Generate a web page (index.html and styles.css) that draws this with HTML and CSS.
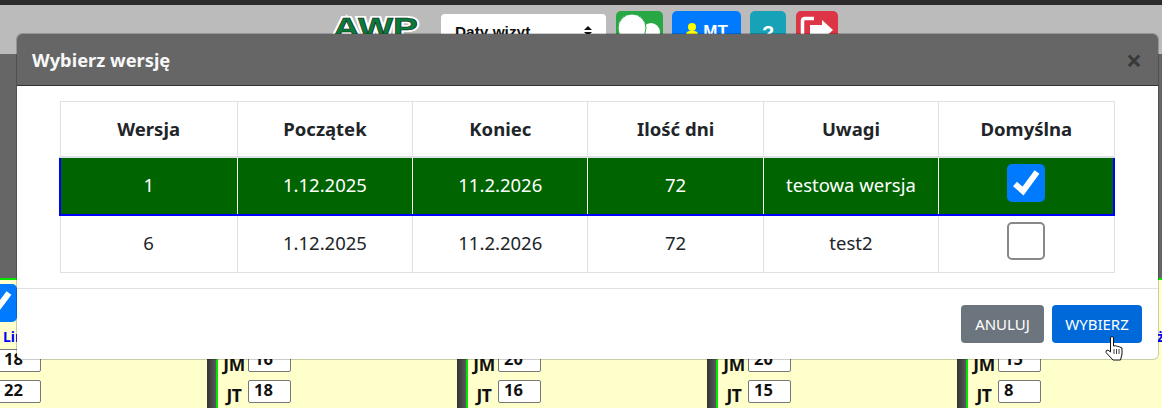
FILE: index.html
```html
<!DOCTYPE html>
<html lang="pl">
<head>
  <meta charset="UTF-8">
  <title>Wybierz wersję</title>
  <link rel="stylesheet" href="styles.css">
</head>
<body>
  <div class="topline"></div>
  <div class="toolbar">
    <svg class="logo" width="90" height="32" viewBox="0 0 90 32">
      <text x="2" y="27" textLength="85" lengthAdjust="spacingAndGlyphs" class="logo-back">AWP</text>
      <text x="2" y="27" textLength="85" lengthAdjust="spacingAndGlyphs" class="logo-text">AWP</text>
    </svg>
    <div class="select-box">Daty wizyt
      <svg width="8" height="10" viewBox="0 0 8 10"><path d="M4 0L8 4H0zM4 10L0 6H8z" fill="#111"/></svg>
    </div>
    <div class="tool green">
      <svg width="47" height="30" viewBox="0 0 47 30">
        <circle cx="35" cy="21" r="9" fill="#fff"/>
        <circle cx="16" cy="17" r="14" fill="#fff" stroke="#28a745" stroke-width="1"/>
      </svg>
    </div>
    <div class="tool blue">
      <svg width="14" height="20" viewBox="0 0 14 20"><circle cx="7" cy="5" r="4" fill="#ff0"/><rect x="1" y="9" width="12" height="9" rx="4" fill="#ff0"/></svg>
      MT
    </div>
    <div class="tool teal">?</div>
    <div class="tool red">
      <svg width="42" height="30" viewBox="0 0 42 30">
        <path d="M18 7.500H9Q6.500 7.500 6.500 10V26" fill="none" stroke="#fff" stroke-width="3.500"/>
        <path d="M14 14H26V9L37 19L26 29V24H14z" fill="#fff"/>
      </svg>
    </div>
  </div>
  <div class="band"></div>

  <div class="columns">
    <div class="col">
      <div class="bar"></div>
      <div class="cell">
        <div class="check-big">
          <svg width="34" height="34" viewBox="0 0 34 34"><path d="M5 19L13 27L28 7" fill="none" stroke="#fff" stroke-width="6"/></svg>
        </div>
        <div class="col-name">Linia rehabilitacyjna</div>
        <div class="dose"><b></b><span class="num">18</span></div>
        <div class="dose"><b></b><span class="num">22</span></div>
      </div>
    </div>
    <div class="col">
      <div class="bar"></div>
      <div class="cell">
        <div class="check-big"></div>
        <div class="col-name">Linia</div>
        <div class="dose"><b>JM</b><span class="num">16</span></div>
        <div class="dose"><b>JT</b><span class="num">18</span></div>
      </div>
    </div>
    <div class="col">
      <div class="bar"></div>
      <div class="cell">
        <div class="check-big"></div>
        <div class="col-name">Linia</div>
        <div class="dose"><b>JM</b><span class="num">20</span></div>
        <div class="dose"><b>JT</b><span class="num">16</span></div>
      </div>
    </div>
    <div class="col">
      <div class="bar"></div>
      <div class="cell">
        <div class="check-big"></div>
        <div class="col-name">Linia</div>
        <div class="dose"><b>JM</b><span class="num">20</span></div>
        <div class="dose"><b>JT</b><span class="num">15</span></div>
      </div>
    </div>
    <div class="col">
      <div class="bar"></div>
      <div class="cell">
        <div class="check-big"></div>
        <div class="col-name col-name-end">ż</div>
        <div class="dose"><b>JM</b><span class="num">15</span></div>
        <div class="dose"><b>JT</b><span class="num">8</span></div>
      </div>
    </div>
  </div>

  <div class="modal">
    <div class="modal-header">
      <h5>Wybierz wersję</h5>
      <span class="close">×</span>
    </div>
    <div class="modal-body">
      <table>
        <thead>
          <tr>
            <th class="first">Wersja</th>
            <th>Początek</th>
            <th>Koniec</th>
            <th>Ilość dni</th>
            <th>Uwagi</th>
            <th>Domyślna</th>
          </tr>
        </thead>
        <tbody>
          <tr class="selected">
            <td>1</td>
            <td>1.12.2025</td>
            <td>11.2.2026</td>
            <td>72</td>
            <td>testowa wersja</td>
            <td>
              <span class="check on">
                <svg width="38" height="38" viewBox="0 0 38 38"><path d="M8 20L16 27L30 8" fill="none" stroke="#fff" stroke-width="6"/></svg>
              </span>
            </td>
          </tr>
          <tr>
            <td>6</td>
            <td>1.12.2025</td>
            <td>11.2.2026</td>
            <td>72</td>
            <td>test2</td>
            <td><span class="check"></span></td>
          </tr>
        </tbody>
      </table>
    </div>
    <div class="modal-footer">
      <button class="btn btn-grey">ANULUJ</button>
      <button class="btn btn-blue">WYBIERZ</button>
    </div>
  </div>

  <svg class="cursor" width="19" height="25" viewBox="0 0 19 25">
    <path d="M5.500 2Q5.500 .5 7 .5T8.500 2V10L10.500 9.800L12.500 10.300L14.500 10.800L17 12V18L15.500 24H8L1 16.500Q.5 14 3 14L5.500 16z" fill="#fff" stroke="#111" stroke-width="1"/>
    <path d="M9 13V18M11.500 13V18M14 13V18" stroke="#111" stroke-width="0.800"/>
  </svg>
</body>
</html>
```

FILE: styles.css
```css
html, body {
  margin: 0;
  height: 408px;
  overflow: hidden;
}
body {
  position: relative;
  font-family: "Noto Sans", Arial, sans-serif;
  background: #666;
}
.topline {
  height: 5px;
  background: #2b2b2b;
}
.toolbar {
  height: 49px;
  background: #bbb;
  display: flex;
  align-items: flex-start;
  padding-left: 331px;
  box-sizing: border-box;
}
.logo {
  margin-top: 5px;
  margin-right: 20px;
}
.logo-back,
.logo-text {
  font-family: "Liberation Sans", Arial, sans-serif;
  font-weight: bold;
  font-size: 28px;
}
.logo-back {
  fill: #fff;
  stroke: #fff;
  stroke-width: 4px;
}
.logo-text {
  fill: #0b7a3a;
  stroke: #111;
  stroke-width: 0.500px;
}
.select-box {
  margin-top: 9px;
  margin-right: 10px;
  width: 165px;
  height: 40px;
  padding: 9px 14px 0 14px;
  box-sizing: border-box;
  background: #fff;
  border-radius: 4px;
  font-family: "Liberation Sans", Arial, sans-serif;
  font-weight: bold;
  font-size: 15.400px;
  color: #111;
  display: flex;
  justify-content: space-between;
  align-items: flex-start;
}
.select-box svg {
  margin-top: 3px;
}
.tool {
  margin-top: 6px;
  height: 40px;
  border-radius: 5px;
  margin-right: 9px;
  display: flex;
  justify-content: center;
  align-items: flex-start;
  color: #fff;
  font-family: "Liberation Sans", Arial, sans-serif;
  font-weight: bold;
  gap: 4px;
  box-sizing: border-box;
}
.tool.green { width: 47px; background: #28a745; }
.tool.blue { width: 69px; background: #007bff; padding-top: 11px; line-height: 20px; font-size: 17px; }
.tool.teal { width: 36px; background: #17a2b8; padding-top: 11px; font-size: 20px; }
.tool.red { width: 42px; margin-left: 1px; background: #dc3545; }
.band {
  height: 224px;
}
.columns {
  display: flex;
  margin-left: -43px;
  border-top: 2px solid #00e600;
  background: #ffc;
  height: 130px;
}
.col {
  flex: 0 0 250px;
  display: flex;
}
.bar {
  flex: 0 0 11px;
  box-sizing: border-box;
  background: linear-gradient(to right, #333, #5a5a5a);
  border-right: 2px solid #00e600;
}
.cell {
  flex: 1;
  min-width: 0;
}
.check-big {
  width: 38px;
  height: 38px;
  margin: 4px 0 0 11px;
  background: #007bff;
  border-radius: 5px;
  display: flex;
  align-items: center;
  justify-content: center;
}
.col-name {
  margin: 5px 0 3px 35px;
  height: 19px;
  font-size: 14px;
  font-weight: bold;
  line-height: 19px;
  color: #00f;
  white-space: nowrap;
}
.col-name-end {
  margin-left: 189px;
}
.dose {
  display: flex;
  align-items: flex-start;
  height: 23px;
  margin-bottom: 8px;
  padding-left: 4px;
  color: #111;
}
.dose b {
  flex: 0 0 24px;
  margin-right: 2px;
  padding-top: 3px;
  text-align: center;
  font-size: 17.500px;
  letter-spacing: -0.500px;
}
.num {
  width: 43px;
  height: 23px;
  line-height: 18px;
  padding-left: 5px;
  box-sizing: border-box;
  background: #fff;
  border: 1px solid #777;
  border-radius: 2px;
  font-weight: bold;
  font-size: 16.500px;
}
.modal {
  position: absolute;
  left: 17px;
  top: 34px;
  width: 1141px;
  height: 325px;
  background: #fff;
  border-radius: 5px;
  overflow: hidden;
  box-shadow: 0 0 0 1px rgba(0, 0, 0, 0.2);
}
.modal-header {
  height: 52px;
  background: #666;
  border-bottom: 1px solid #333;
  box-sizing: border-box;
  display: flex;
  align-items: center;
  justify-content: space-between;
  padding: 0 16px 0 15px;
  color: #f8f8f8;
}
.modal-header h5 {
  margin: 0;
  font-size: 18.300px;
  font-weight: 700;
}
.close {
  font-size: 28px;
  font-weight: bold;
  line-height: 28px;
  color: #3a3a3a;
}
.modal-body {
  padding: 15px 42px;
  height: 203px;
  box-sizing: border-box;
  border-bottom: 1px solid #dee2e6;
}
table {
  border-collapse: collapse;
  width: 1056px;
  table-layout: fixed;
  color: #212529;
  font-size: 18.500px;
}
th, td {
  border: 1px solid #dee2e6;
  text-align: center;
  padding: 0 0 3px;
  height: 53px;
}
th {
  height: 53px;
  padding-bottom: 1px;
  font-weight: 700;
  border-bottom-width: 2px;
}
th.first {
  width: 176.300px;
}
.selected td {
  background: #006400;
  color: #fff;
  border-color: #fff;
  border-top-color: #dee2e6;
  border-bottom: 2px solid #00f;
}
.selected td:first-child {
  border-left: 2px solid #00f;
}
.selected td:last-child {
  border-right: 2px solid #00f;
}
.check {
  display: inline-block;
  width: 38px;
  height: 38px;
  margin-bottom: 3px;
  box-sizing: border-box;
  border: 2px solid #888;
  border-radius: 5px;
  background: #fff;
  vertical-align: middle;
}
.check.on {
  background: #007bff;
  border: none;
}
.check svg {
  display: block;
}
.modal-footer {
  display: flex;
  justify-content: flex-end;
  gap: 8px;
  padding: 16px 16px 0 0;
}
.btn {
  height: 38px;
  border: none;
  border-radius: 4px;
  color: #fff;
  font-family: inherit;
  font-size: 15px;
  padding: 0;
}
.btn-grey {
  width: 83px;
  background: #6c757d;
}
.btn-blue {
  width: 90px;
  background: #0069d9;
}
.cursor {
  position: absolute;
  left: 1105px;
  top: 336px;
}
```
